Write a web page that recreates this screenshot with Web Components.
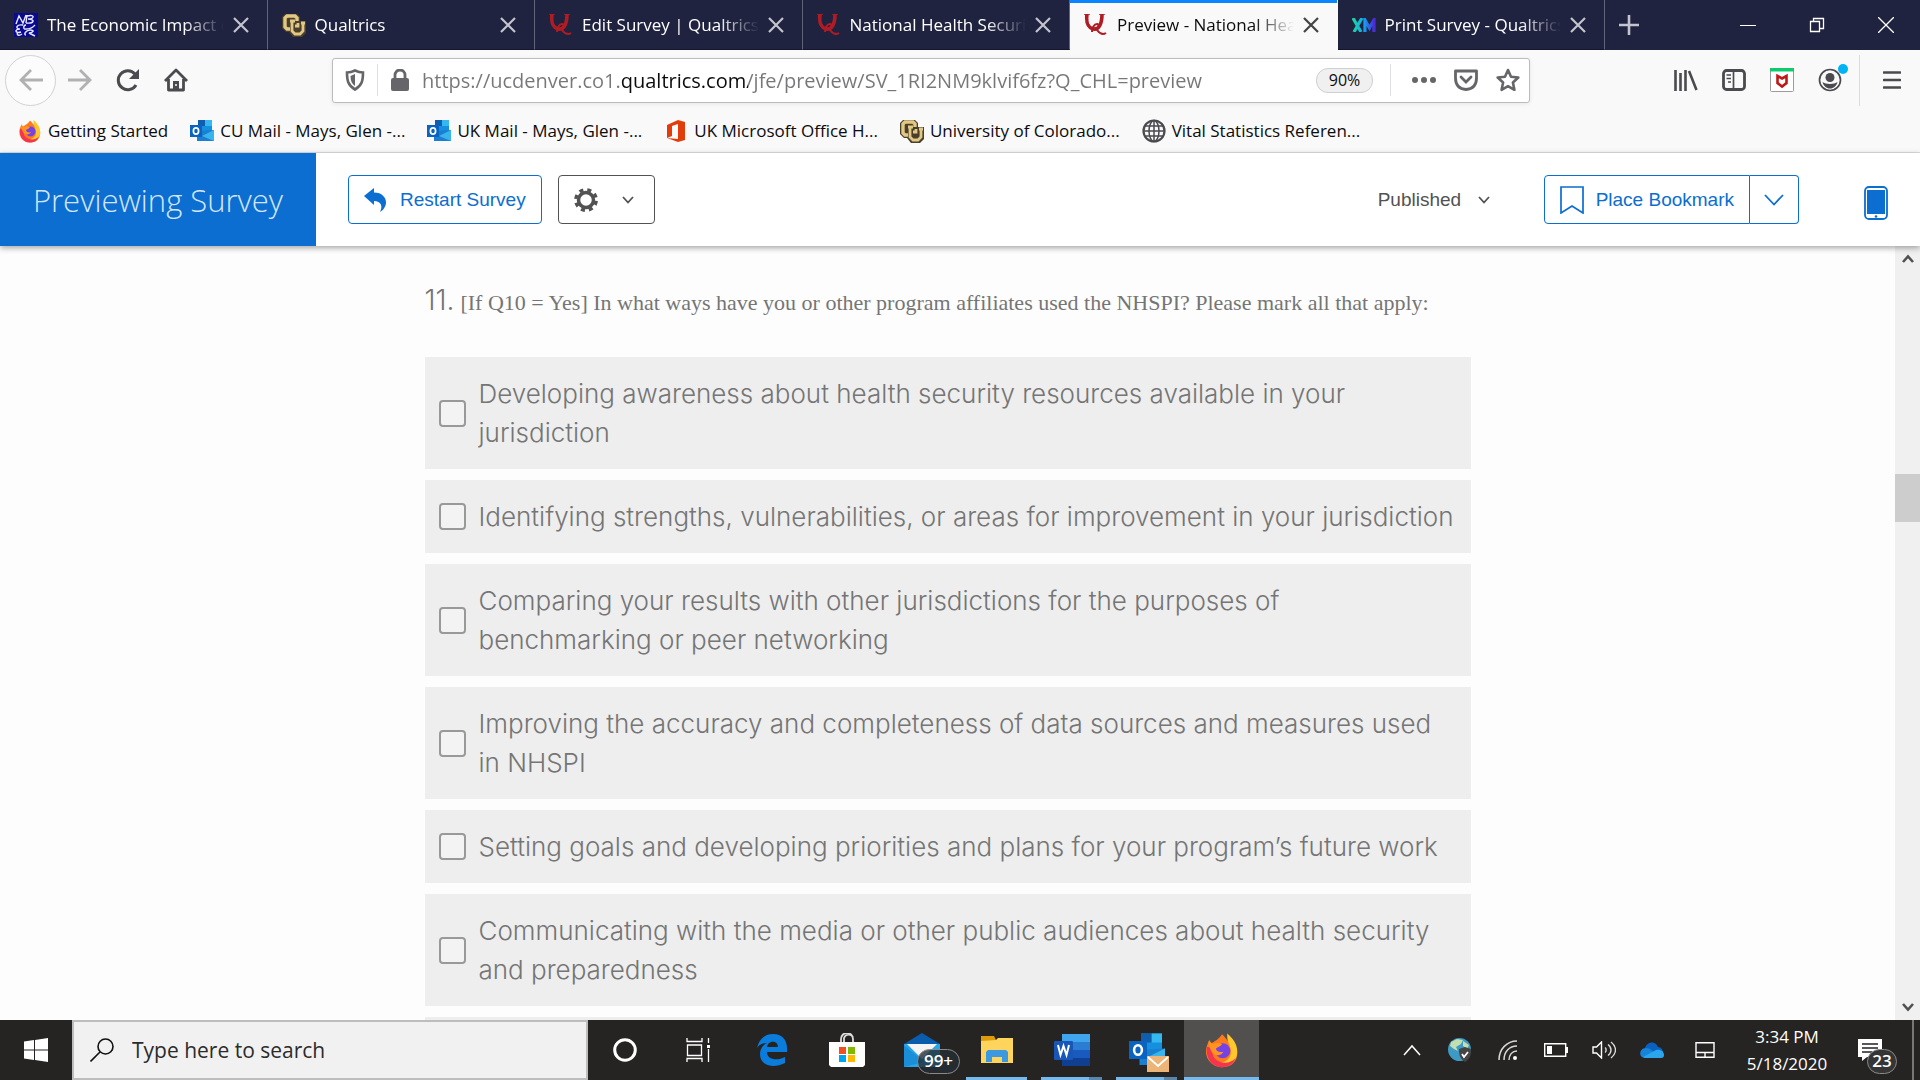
<!DOCTYPE html>
<html lang="en">
<head>
<meta charset="utf-8">
<title>Preview - National Health Security Preparedness Index</title>
<style>
  html, body {
    height: 100%;
    margin: 0;
  }
  body {
    display: flex;
    flex-direction: column;
    overflow: hidden;
    font-family: "Open Sans", "Noto Sans", sans-serif;
    font-size: 17px;
    color: #0c0c0d;
    background: #fdfdfd;
  }
  .page {
    display: flex;
    flex: 1;
    min-height: 0;
  }
</style>
</head>
<body>
  <tab-strip>
    <browser-tab icon="nber">The Economic Impact of</browser-tab>
    <browser-tab icon="cu">Qualtrics</browser-tab>
    <browser-tab icon="q">Edit Survey | Qualtrics S</browser-tab>
    <browser-tab icon="q">National Health Security</browser-tab>
    <browser-tab icon="q" active>Preview - National Health</browser-tab>
    <browser-tab icon="xm">Print Survey - Qualtrics</browser-tab>
  </tab-strip>
  <nav-bar url="https://ucdenver.co1.qualtrics.com/jfe/preview/SV_1RI2NM9klvif6fz?Q_CHL=preview"></nav-bar>
  <bookmarks-bar>
    <bookmark-link icon="firefox">Getting Started</bookmark-link>
    <bookmark-link icon="outlook">CU Mail - Mays, Glen -...</bookmark-link>
    <bookmark-link icon="outlook">UK Mail - Mays, Glen -...</bookmark-link>
    <bookmark-link icon="office">UK Microsoft Office H...</bookmark-link>
    <bookmark-link icon="cu">University of Colorado...</bookmark-link>
    <bookmark-link icon="globe">Vital Statistics Referen...</bookmark-link>
  </bookmarks-bar>
  <preview-header></preview-header>
  <div class="page">
    <survey-question number="11.">
      <span slot="text">[If Q10 = Yes] In what ways have you or other program affiliates used the NHSPI? Please mark all that apply:</span>
      <survey-option>Developing awareness about health security resources available in your jurisdiction</survey-option>
      <survey-option>Identifying strengths, vulnerabilities, or areas for improvement in your jurisdiction</survey-option>
      <survey-option>Comparing your results with other jurisdictions for the purposes of<br>benchmarking or peer networking</survey-option>
      <survey-option>Improving the accuracy and completeness of data sources and measures used<br>in NHSPI</survey-option>
      <survey-option>Setting goals and developing priorities and plans for your program’s future work</survey-option>
      <survey-option>Communicating with the media or other public audiences about health security and preparedness</survey-option>
      <survey-option></survey-option>
    </survey-question>
    <page-scrollbar></page-scrollbar>
  </div>
  <task-bar></task-bar>

<script>
const cuLogo = `
  <path d="M3 1h12l3 3v4h6v12l-4 4h-9l-4-5H4l-4-4V4z" fill="#4a3f28"/>
  <path d="M15 8V5l-2-2H5L3 5v9l2 2h3" fill="none" stroke="#e2c886" stroke-width="3.400"/>
  <path d="M8 8h5M10 8v10l3 3h5l3-3V10M13 13h3v-3M19 10h4" fill="none" stroke="#e2c886" stroke-width="2.800"/>`;

const firefoxLogo = `
  <path d="M12 1.500c2 1.500 2.500 3 4 4.500l1-1c4 3 6 7 5 11-1 5-5 7.500-10 7.500S2.500 20 1.500 15C1 11 2 8 4 5c0 1.500.5 2 1 2.500C7 6 10 5 12 1.500z" fill="#ff7a1a"/>
  <path d="M15.500 1c4 3.500 7.500 8 6.500 14-1 5-5 8-10 8-3 0-5.500-1-7-3 7 2 13-1 13-7 0-4-3-6-2.500-12z" fill="#ffc72e"/>
  <path d="M2 10c-1 7 3 13.500 10 13.500 5 0 8-3 9-6-3 3-7 4-11 2-4-1.500-5-5-4-9z" fill="#f5344f"/>
  <circle cx="12.500" cy="12.500" r="5" fill="#7542e5"/>
  <path d="M3 6l3 2c2-1 4-1 6 0-1 2-3 2-4 3 0 2 3 3 5 2-1 3-6 3.500-8 0C4 11 3 9 3 6z" fill="#ff9422"/>`;

const outlookLogo = `
  <path d="M8 1h14v11H8z" fill="#1490df"/>
  <path d="M15 1h7v6h-7z" fill="#35b8f1"/>
  <path d="M8 1h7v6H8z" fill="#0f5fae"/>
  <path d="M7 12l17-1v11H7z" fill="#1a7fd1"/>
  <path d="M24 11v11l-12-5z" fill="#39b5ee"/>
  <path d="M0 6h12v12H0z" fill="#0a63c0"/>
  <ellipse cx="6" cy="12" rx="2.600" ry="3.200" fill="none" stroke="#fff" stroke-width="1.700"/>`;

// name: [viewBox, markup]
const icons = {
  nber: ['0 0 24 24', `<path d="M0 0h24v24H0z" fill="#090a8f"/><g fill="none" stroke="#e8e9ff" stroke-width="1.400">
    <path d="M2 11L5 3l4 7 3-8M13 2l-1 8M13 3c9-2 7 3 1 3 8 0 6 5-2 4M9 12c-7-1-8 4-3 4-6 0-5 5 1 3M12 12c-3 0-3 5 0 4 6 0 8-3 9-4M8 21c-4 3-6 0-4-2M12 22c-3 0 0-5 4-5 6 0 2 3-1 3l6 3"/></g>`],
  cu: ['0 0 24 24', cuLogo],
  q: ['0 0 24 22', `<path d="M3 0c-1 8 0 13 6 15 6 1 9-5 9-15" fill="none" stroke="#b01c23" stroke-width="3.600"/>
    <path d="M8 18c0-4 2-8 5-8s1 4 0 6c3 4 6 5 9 3" fill="none" stroke="#b01c23" stroke-width="2"/><path d="M0 0h6M15 0h6" stroke="#b01c23" stroke-width="1.500"/>`],
  xm: ['0 0 24 14', `<defs><linearGradient id="g"><stop offset="0" stop-color="#1ed6a0"/><stop offset=".5" stop-color="#12a8f0"/><stop offset="1" stop-color="#4a2bd8"/></linearGradient></defs>
    <path d="M1 0l8 14M10 0L2 14M13 14V2l4.500 8L22 2v12" fill="none" stroke="url(#g)" stroke-width="3.200"/>`],
  close: ['0 0 16 16', `<path d="M1 1l14 14M15 1L1 15" fill="none" stroke="currentColor" stroke-width="2.200"/>`],
  plus: ['0 0 22 22', `<path d="M11 1v20M1 11h20" stroke="currentColor" stroke-width="2.600"/>`],
  minimize: ['0 0 16 16', `<path d="M0 8.500h16" stroke="#fff"/>`],
  restore: ['0 0 16 16', `<path d="M1.500 4.500h9v10h-9zM4.500 4V1.500h10v10H11" fill="none" stroke="#fff" stroke-width="1.300"/>`],
  closeWindow: ['0 0 16 16', `<path d="M0 0l16 16M16 0L0 16" stroke="#fff" stroke-width="1.300"/>`],
  back: ['0 0 24 24', `<path d="M12 2L2 12l10 10M2 12h22" fill="none" stroke="currentColor" stroke-width="2.800"/>`],
  forward: ['0 0 24 24', `<path d="M12 2l10 10-10 10M22 12H0" fill="none" stroke="currentColor" stroke-width="2.800"/>`],
  reload: ['0 0 24 24', `<path d="M19 6a9.500 9.500 0 1 0 1 11" fill="none" stroke="currentColor" stroke-width="3"/><path d="M23 1v10H13z" fill="currentColor"/>`],
  home: ['0 0 24 24', `<path d="M1 13L12 2l11 11M4.500 11v11h15V11" fill="none" stroke="currentColor" stroke-width="2.800" stroke-linejoin="round"/><path d="M9 13h6v9H9z" fill="currentColor"/><path d="M12 16v2" stroke="#fff" stroke-width="1.500"/>`],
  shield: ['0 0 20 22', `<path d="M10 1.500c3 1.500 5 2 8 2 0 8-1 13-8 17-7-4-8-9-8-17 3 0 5-.5 8-2z" fill="none" stroke="currentColor" stroke-width="2.600"/><path d="M10 5v12c-3-2-4.500-5-4.500-10z" fill="currentColor"/>`],
  lock: ['0 0 20 22', `<path d="M5 10V6a5 5 0 0 1 10 0v4" fill="none" stroke="currentColor" stroke-width="2.800"/><rect x="1" y="9" width="18" height="13" rx="2" fill="currentColor"/>`],
  dots: ['0 0 24 6', `<g fill="currentColor"><circle cx="3" cy="3" r="3"/><circle cx="12" cy="3" r="3"/><circle cx="21" cy="3" r="3"/></g>`],
  pocket: ['0 0 24 22', `<path d="M1.500 2h21v7c0 7-4 11-10.500 11.500C5.500 20 1.500 16 1.500 9z" fill="none" stroke="currentColor" stroke-width="2.800" stroke-linejoin="round"/><path d="M7 8l5 5 5-5" fill="none" stroke="currentColor" stroke-width="2.800" stroke-linecap="round"/>`],
  star: ['0 0 24 24', `<path d="M12 2l3 6.700 7.300.8-5.400 5 1.500 7.300L12 18.200l-6.400 3.600 1.500-7.300-5.400-5 7.300-.8z" fill="none" stroke="currentColor" stroke-width="2.600" stroke-linejoin="round"/>`],
  library: ['0 0 24 22', `<path d="M1.500 1v21M6.500 4v18M11.500 1v21M15 2l7.500 19" stroke="currentColor" stroke-width="2.600"/>`],
  sidebar: ['0 0 24 22', `<rect x="1.500" y="1.500" width="21" height="19" rx="3" fill="none" stroke="currentColor" stroke-width="2.800"/><path d="M11.500 2v18M4.500 6H9M4.500 9.500H9M6 13h3" stroke="currentColor" stroke-width="1.700"/>`],
  mcafee: ['0 0 24 24', `<rect x=".5" y=".5" width="23" height="23" rx="1" fill="#fff" stroke="#9b9b9f"/><path d="M0 0h24v3.500H0z" fill="#0fca6c"/><path d="M7.500 8l4.500 2.500L16.500 8v7L12 18.500 7.500 15z" fill="none" stroke="#c01818" stroke-width="2.600"/>`],
  account: ['0 0 24 24', `<circle cx="12" cy="12" r="10.500" fill="none" stroke="currentColor" stroke-width="1.700"/><circle cx="12" cy="9.500" r="4.500" fill="currentColor"/><path d="M4.500 14c3 2.500 12 2.500 15 0-1 4-4 6.500-7.500 6.500S5.500 18 4.500 14z" fill="currentColor"/>`],
  menu: ['0 0 18 18', `<path d="M1 1.500h16M1 9h16M1 16.500h16" stroke="currentColor" stroke-width="2.600" stroke-linecap="round"/>`],
  firefox: ['0 0 24 24', firefoxLogo],
  outlook: ['0 0 24 24', outlookLogo],
  office: ['0 0 24 24', `<path d="M14 1l7 2v18l-7 2-11-4 11 1V5L8 7v10l-5 2V6z" fill="#e13d0b"/>`],
  globe: ['0 0 24 24', `<g fill="none" stroke="#4a4a4f" stroke-width="1.500"><circle cx="12" cy="12" r="10.500" stroke-width="2.200"/><ellipse cx="12" cy="12" rx="5" ry="10.500"/><path d="M12 1v22M1 12h22M3 7h18M3 17h18"/></g>`],
  restart: ['0 0 24 24', `<path d="M0 8l10-8v4.500c8 0 12 5 12 10 0 4-3 8-6 9.500 3-6 1-11-6-11v4z" fill="currentColor"/>`],
  gear: ['0 0 24 24', `<circle cx="12" cy="12" r="7.500" fill="none" stroke="currentColor" stroke-width="3.500"/><circle cx="12" cy="12" r="10.200" fill="none" stroke="currentColor" stroke-width="3.500" stroke-dasharray="4 4.011" stroke-dashoffset="-1"/>`],
  chevron: ['0 0 12 8', `<path d="M1 1l5 5.500L11 1" fill="none" stroke="currentColor" stroke-width="1.800"/>`],
  wideChevron: ['0 0 20 12', `<path d="M1 1l9 9.500L19 1" fill="none" stroke="currentColor" stroke-width="1.800"/>`],
  bookmark: ['0 0 24 28', `<path d="M1 1h22v26l-11-7-11 7z" fill="none" stroke="currentColor" stroke-width="1.700"/>`],
  phone: ['0 0 24 34', `<rect x="1" y="1" width="22" height="32" rx="4" fill="#fff" stroke="#0b6ed0" stroke-width="1.800"/><path d="M3 4h18v24H3z" fill="#0b6ed0"/><circle cx="12" cy="30.500" r="1.300" fill="#0b6ed0"/>`],
  scrollUp: ['0 0 12 10', `<path d="M1 8l5-5.500L11 8" fill="none" stroke="#505050" stroke-width="2.600"/>`],
  scrollDown: ['0 0 12 10', `<path d="M1 2l5 5.500L11 2" fill="none" stroke="#505050" stroke-width="2.600"/>`],
  windows: ['0 0 24 24', `<path d="M0 3.500l10-1.400v9.400H0zM11 2l13-2v11.500H11zM0 12.500h10v9.400L0 20.500zM11 12.500h13V24l-13-2z" fill="#fff"/>`],
  search: ['0 0 24 24', `<circle cx="15.500" cy="8.500" r="7.500" fill="none" stroke="#111" stroke-width="1.600"/><path d="M10 14l-9.500 9.500" stroke="#111" stroke-width="1.600"/>`],
  cortana: ['0 0 24 24', `<circle cx="12" cy="12" r="10.300" fill="none" stroke="#fff" stroke-width="3"/>`],
  taskview: ['0 0 24 24', `<path d="M1 0v3.500h15V0M1.500 7h14v10.500h-14zM1 24v-3.500h15V24M22.500 0v5M22.500 11v13" fill="none" stroke="#fff" stroke-width="1.300"/><path d="M21 7h3v3h-3z" fill="#fff"/>`],
  edge: ['0 0 30 32', `<path d="M0 14C2 5 8 0 16 0c9 0 14 6 14 14v4H10c0 8 10 9 18 5v6c-4 2-8 3-12 3C8 32 3 27 3 20c0-5 3-9 7-11-5 0-8 2-10 5zM10 13h11c0-7-10-7-11 0z" fill="#0a7cdb" fill-rule="evenodd"/>`],
  store: ['0 0 36 34', `<path d="M12 10V6a6 6 0 0 1 12 0v4M15 10V5a5 5 0 0 1 9-1" fill="none" stroke="#ddd" stroke-width="1.800"/><path d="M0 9h36v23l-2 2H2l-2-2z" fill="#fff"/><path d="M10 14h7v7h-7z" fill="#f25022"/><path d="M19 14h7v7h-7z" fill="#7fba00"/><path d="M10 22h7v7h-7z" fill="#00a4ef"/><path d="M19 22h7v7h-7z" fill="#ffb900"/>`],
  mail: ['0 0 36 34', `<path d="M0 11L18 0l18 11z" fill="#0a5cad"/><path d="M0 11h36v23H0z" fill="#28a5e8"/><path d="M3 11h30L18 26z" fill="#f4f4f4"/><path d="M0 34V12l20 17z" fill="#1a8fd8"/>`],
  explorer: ['0 0 32 28', `<path d="M0 0h13l2 4h17v6H0z" fill="#dd9a0a"/><path d="M0 5l15-1 2-2h15v25H0z" fill="#ffd45c"/><path d="M5 26V16l2-2h18l2 2v10h-6v-5H11v5z" fill="#3a99e0"/>`],
  word: ['0 0 36 34', `<path d="M8 1h28v9H8z" fill="#41a5ee"/><path d="M8 9h28v9H8z" fill="#2b7cd3"/><path d="M8 17h28v8H8z" fill="#185abd"/><path d="M8 25h28v8H8z" fill="#103f91"/><rect y="8" width="19" height="19" rx="1" fill="#1857b8"/><path d="M4 12l2.500 10L9.500 13l3 9L15 12" fill="none" stroke="#fff" stroke-width="2"/>`],
  envelope: ['0 0 22 16', `<path d="M0 0h22v16H0z" fill="#ecb476"/><path d="M1 1l10 9L21 1" fill="none" stroke="#fff" stroke-width="1.800"/>`],
  trayUp: ['0 0 18 12', `<path d="M1 11l8-9 8 9" fill="none" stroke="#fff" stroke-width="1.500"/>`],
  trayGlobe: ['0 0 24 24', `<circle cx="11.500" cy="11.500" r="11.500" fill="#3d9ac4"/><path d="M3 4l6-3 6 1-2 4-5 3 2 4-4-2-4-3zM15 3l6 4-2 4-4-3z" fill="#c3dfaf"/><path d="M17 9l6 2c0 6-1 10-6 13-5-3-6-7-6-13z" fill="#444"/><path d="M14 16l2 3 4-5" fill="none" stroke="#fff" stroke-width="1.800"/>`],
  wifi: ['0 0 20 20', `<g fill="none" stroke="#d8d8d8" stroke-width="1.500"><path d="M1 20C1 9 9 1 19 1M6 20c0-8 5-14 13-14M11 20c0-5 3-9 8-9" /></g><circle cx="17" cy="18" r="2" fill="#fff"/>`],
  battery: ['0 0 24 14', `<path d="M.7.7h21v12.600H.7z" fill="none" stroke="#fff" stroke-width="1.400"/><path d="M3 3h5v8H3zM22 4h2v6h-2z" fill="#fff"/>`],
  speaker: ['0 0 24 18', `<path d="M1 6h3.500l5-5v16l-5-5H1z" fill="none" stroke="#fff" stroke-width="1.400"/><path d="M13 6.500c1.500 1 1.500 4 0 5M16 3.500c4 3 4 8 0 11M19 1c6 5 6 11 0 16" fill="none" stroke="#ddd" stroke-width="1.400"/>`],
  onedrive: ['0 0 24 16' , `<path d="M5 6c2-6 10-8 13-1 3 0 5 3 5 5H2z" fill="#0a62c0"/><path d="M5 16c-7 0-6-10 1-10 4 0 7 3 9 6z" fill="#1684d8"/><path d="M3 15l13-7c5-1 8 2 8 5 0 2-1 3-3 3H5z" fill="#2ba6ec"/>`],
  touchpad: ['0 0 20 16', `<path d="M1 .7h18v14.600H1zM1 10.500h18M10 10.500v5" fill="none" stroke="#fff" stroke-width="1.400"/>`],
  notes: ['0 0 24 22', `<path d="M0 0h24v18H9l-5 4v-4H0z" fill="#fff"/><path d="M4 5h16M4 9h16M4 13h10" stroke="#222" stroke-width="1.300"/>`]
};

function shadow(element, html) {
  element.attachShadow({mode: 'open'}).innerHTML = html;
}

class UiIcon extends HTMLElement {
  connectedCallback() {
    if (this.shadowRoot) return;
    const [box, markup] = icons[this.getAttribute('name')];
    const [, , w, h] = box.split(' ');
    const width = this.getAttribute('width') || w;
    const height = Math.round(width * h / w);
    shadow(this, `
      <style>
        :host { display: block; flex: none; }
        svg { display: block; }
      </style>
      <svg width="${width}" height="${height}" viewBox="${box}" aria-hidden="true">${markup}</svg>
    `);
  }
}

class TabStrip extends HTMLElement {
  connectedCallback() {
    shadow(this, `
      <style>
        :host { display: flex; flex: none; height: 50px; background: #202340; color: #fff; }
        .tabs { display: flex; flex: 1; min-width: 0; }
        .controls { display: flex; align-items: center; flex: none; width: 315px; }
        button { display: flex; align-items: center; justify-content: center; width: 69px; height: 50px; padding: 0; border: 0; background: none; color: #c3c4cd; }
        .add { width: 48px; margin-right: auto; }
      </style>
      <div class="tabs"><slot></slot></div>
      <div class="controls">
        <button class="add" aria-label="New tab"><ui-icon name="plus"></ui-icon></button>
        <button aria-label="Minimize"><ui-icon name="minimize"></ui-icon></button>
        <button aria-label="Restore"><ui-icon name="restore"></ui-icon></button>
        <button aria-label="Close window"><ui-icon name="closeWindow"></ui-icon></button>
      </div>
    `);
  }
}

class BrowserTab extends HTMLElement {
  connectedCallback() {
    shadow(this, `
      <style>
        :host {
          display: flex; align-items: center; gap: 9px; flex: 1; min-width: 0; box-sizing: border-box;
          padding: 0 18px 0 14px; border-right: 1px solid #62647a; border-bottom: 1px solid #15172e;
        }
        :host([active]) { background: #f9f9fa; color: #0c0c0d; border-color: #f9f9fa; box-shadow: inset 0 3px #0a84ff; }
        .title {
          flex: 1; overflow: hidden; white-space: nowrap; line-height: 24px;
          -webkit-mask-image: linear-gradient(to left, transparent, #000 40px);
          mask-image: linear-gradient(to left, transparent, #000 40px);
        }
        button { padding: 0; border: 0; background: none; color: #c3c4cd; }
        :host([active]) button { color: #444; }
      </style>
      <ui-icon name="${this.getAttribute('icon')}" width="24"></ui-icon>
      <span class="title"><slot></slot></span>
      <button aria-label="Close tab"><ui-icon name="close"></ui-icon></button>
    `);
  }
}

class NavBar extends HTMLElement {
  connectedCallback() {
    shadow(this, `
      <style>
        :host { display: flex; align-items: center; flex: none; height: 60px; padding: 0 8px 0 5px; background: #f9f9fa; color: #4a4a4f; }
        button { display: flex; align-items: center; justify-content: center; flex: none; width: 48px; height: 48px; padding: 0; border: 0; background: none; color: inherit; position: relative; }
        button[disabled] { color: #b1b1b3; }
        .back { width: 51px; height: 51px; border: 1px solid #d2d2d4; border-radius: 50%; background: #fcfcfc; }
        .address {
          display: flex; align-items: center; flex: 1; box-sizing: border-box; height: 45px; margin: 0 132px; padding-left: 12px;
          border: 1px solid #bcbcbe; border-radius: 3px; background: #fff; box-shadow: 0 1px 4px rgba(0, 0, 0, .08); color: #66666a;
        }
        .address button { width: 42px; height: 42px; }
        .line { width: 1px; height: 32px; margin: 0 12px; background: #dfdfe1; }
        input {
          flex: 1; min-width: 0; height: 32px; margin-left: 12px; padding: 0; border: 0; outline: 0; font: 20px "Open Sans", sans-serif;
          color: transparent; -webkit-background-clip: text; background-clip: text;
          background-image: linear-gradient(to right, #77777a 198px, #0c0c0d 198px 326px, #77777a 326px);
        }
        .address .zoom { width: 57px; height: 25px; margin-right: 5px; border: 1px solid #cfcfd1; border-radius: 12px; background: #f0f0f1; color: #0c0c0d; font: 16px "Open Sans", sans-serif; }
        .badge { position: absolute; top: 8px; right: 6px; width: 10px; height: 10px; border-radius: 50%; background: #00b3f4; }
        .end { width: 1px; height: 51px; margin: 0 12px 0 5px; background: #dcdcde; }
        .menu { width: 40px; }
      </style>
      <button class="back" aria-label="Back" disabled><ui-icon name="back"></ui-icon></button>
      <button aria-label="Forward" disabled><ui-icon name="forward"></ui-icon></button>
      <button aria-label="Reload"><ui-icon name="reload"></ui-icon></button>
      <button aria-label="Home"><ui-icon name="home"></ui-icon></button>
      <div class="address">
        <ui-icon name="shield"></ui-icon>
        <span class="line"></span>
        <ui-icon name="lock"></ui-icon>
        <input type="text" aria-label="Address" value="${this.getAttribute('url')}">
        <button class="zoom">90%</button>
        <span class="line"></span>
        <button aria-label="Page actions"><ui-icon name="dots"></ui-icon></button>
        <button aria-label="Save to Pocket"><ui-icon name="pocket"></ui-icon></button>
        <button aria-label="Bookmark this page"><ui-icon name="star"></ui-icon></button>
      </div>
      <button aria-label="Library"><ui-icon name="library"></ui-icon></button>
      <button aria-label="Sidebars"><ui-icon name="sidebar"></ui-icon></button>
      <button aria-label="McAfee"><ui-icon name="mcafee"></ui-icon></button>
      <button aria-label="Account"><ui-icon name="account"></ui-icon><span class="badge"></span></button>
      <span class="end"></span>
      <button class="menu" aria-label="Menu"><ui-icon name="menu"></ui-icon></button>
    `);
  }
}

class BookmarksBar extends HTMLElement {
  connectedCallback() {
    shadow(this, `
      <style>
        :host { display: flex; align-items: center; gap: 22px; flex: none; height: 42px; padding-left: 18px; background: #f9f9fa; border-bottom: 1px solid #dededf; }
      </style>
      <slot></slot>
    `);
  }
}

class BookmarkLink extends HTMLElement {
  connectedCallback() {
    shadow(this, `
      <style>
        :host { display: block; }
        a { display: flex; align-items: center; gap: 6px; color: inherit; text-decoration: none; white-space: nowrap; line-height: 24px; }
      </style>
      <a href="#"><ui-icon name="${this.getAttribute('icon')}" width="24"></ui-icon><span><slot></slot></span></a>
    `);
  }
}

class PreviewHeader extends HTMLElement {
  connectedCallback() {
    shadow(this, `
      <style>
        :host {
          display: flex; align-items: center; flex: none; height: 93px; position: relative; background: #fff;
          box-shadow: 0 2px 6px rgba(0, 0, 0, .35); font: 19px "Liberation Sans", Arial, sans-serif; color: #525252;
        }
        h1 {
          display: flex; align-items: center; justify-content: center; width: 316px; height: 93px; margin: 0 32px 0 0;
          background: #0b6ed0; color: #d3e6f8; font: 300 31px "Open Sans", sans-serif;
        }
        button, select { font: inherit; color: inherit; background: none; }
        button { display: flex; align-items: center; box-sizing: border-box; height: 49px; border: 1px solid #525252; border-radius: 4px; padding: 0 15px; }
        .blue { color: #0b6ed0; border-color: #0b6ed0; }
        .restart { gap: 12px; margin-right: 16px; }
        .gear { gap: 24px; padding-right: 20px; }
        .status { display: flex; align-items: center; gap: 16px; margin: 0 54px 0 auto; }
        select { appearance: none; border: 0; padding: 0; }
        .place { gap: 12px; border-radius: 4px 0 0 4px; }
        .more { border-left: 0; border-radius: 0 4px 4px 0; padding: 0 14px; }
        .phone { margin: 0 16px 0 49px; padding: 6px 16px 0; border: 0; }
      </style>
      <h1>Previewing Survey</h1>
      <button class="blue restart"><ui-icon name="restart"></ui-icon>Restart Survey</button>
      <button class="gear" aria-label="Tools"><ui-icon name="gear"></ui-icon><ui-icon name="chevron"></ui-icon></button>
      <label class="status">
        <select aria-label="Version"><option>Published</option></select>
        <ui-icon name="chevron"></ui-icon>
      </label>
      <button class="blue place"><ui-icon name="bookmark"></ui-icon>Place Bookmark</button>
      <button class="blue more" aria-label="Bookmarks"><ui-icon name="wideChevron"></ui-icon></button>
      <button class="phone" aria-label="Mobile view"><ui-icon name="phone"></ui-icon></button>
    `);
  }
}

class SurveyQuestion extends HTMLElement {
  connectedCallback() {
    shadow(this, `
      <style>
        :host { display: block; flex: 1; overflow: hidden; padding: 0 16px; color: #757575; }
        fieldset { display: flex; flex-direction: column; gap: 11px; max-width: 1046px; margin: 0 auto; padding: 0; border: 0; }
        legend { display: flex; align-items: baseline; gap: 6px; padding: 32px 0; line-height: 44px; font-family: "Liberation Serif", "Times New Roman", serif; font-size: 22px; }
        .number { font: 300 28px/44px Inter, sans-serif; }
      </style>
      <fieldset>
        <legend><span class="number">${this.getAttribute('number')}</span><slot name="text"></slot></legend>
        <slot></slot>
      </fieldset>
    `);
  }
}

class SurveyOption extends HTMLElement {
  connectedCallback() {
    shadow(this, `
      <style>
        :host { display: block; flex: none; background: #eee; font: 300 26px/39px Inter, "Open Sans", sans-serif; }
        label { display: flex; align-items: center; gap: 13px; min-height: 39px; padding: 17px 14px; }
        input { appearance: none; flex: none; box-sizing: border-box; width: 27px; height: 27px; margin: 0; border: 2px solid #999; border-radius: 4px; background: #f3f3f3; }
      </style>
      <label for="choice"><input type="checkbox" id="choice"><span><slot></slot></span></label>
    `);
  }
}

class PageScrollbar extends HTMLElement {
  connectedCallback() {
    shadow(this, `
      <style>
        :host { display: flex; flex-direction: column; flex: none; width: 25px; background: #f0f0f0; }
        .arrow { display: flex; align-items: center; justify-content: center; height: 26px; }
        .above { flex: 30; }
        .thumb { flex: 7; background: #cdcdcd; }
        .below { flex: 70; }
      </style>
      <div class="arrow"><ui-icon name="scrollUp"></ui-icon></div>
      <div class="above"></div>
      <div class="thumb"></div>
      <div class="below"></div>
      <div class="arrow"><ui-icon name="scrollDown"></ui-icon></div>
    `);
  }
}

class TaskApp extends HTMLElement {
  connectedCallback() {
    const badge = this.getAttribute('badge');
    shadow(this, `
      <style>
        :host { display: block; flex: none; width: 75px; }
        :host([narrow]) { width: 73px; }
        button { display: flex; align-items: center; justify-content: center; position: relative; width: 100%; height: 60px; padding: 0; border: 0; background: none; }
        :host([running]) button::after { content: ""; position: absolute; bottom: 0; left: 7px; right: 7px; height: 3px; background: #76b9ed; }
        :host([stacked]) button::after { background: linear-gradient(to right, #76b9ed 48px, #5a86ab 48px); }
        :host([active]) button { background: #51504f; }
        :host([active]) button::after { left: 0; right: 0; }
        .badge { position: absolute; right: -1px; top: 29px; width: 41px; height: 23px; border: 1px solid #8a8a8a; border-radius: 13px; background: rgba(38, 46, 52, .8); color: #fff; font: 600 17px/22px "Open Sans", sans-serif; }
        .overlay { display: block; position: absolute; right: 15px; bottom: 8px; }
      </style>
      <button aria-label="${this.getAttribute('label')}">
        <ui-icon name="${this.getAttribute('icon')}" width="${this.getAttribute('size')}"></ui-icon>
        ${badge ? `<span class="badge">${badge}</span>` : ''}
        <slot class="overlay"></slot>
      </button>
    `);
  }
}

class TaskBar extends HTMLElement {
  connectedCallback() {
    const tray = ['trayUp', 'trayGlobe', 'wifi', 'battery', 'speaker', 'onedrive', 'touchpad'];
    shadow(this, `
      <style>
        :host { display: flex; flex: none; height: 60px; background: #262423; color: #fff; position: relative; }
        button { display: flex; align-items: center; justify-content: center; flex: none; width: 48px; padding: 0; border: 0; background: none; color: inherit; position: relative; }
        .start { width: 72px; }
        .search { display: flex; align-items: center; gap: 18px; box-sizing: border-box; flex: 0 1 516px; padding-left: 16px; border: 2px solid #bdbdbd; background: #f1f1f1; }
        input { flex: 1; min-width: 0; height: 40px; padding: 0; border: 0; outline: 0; background: none; font: 21px "Open Sans", sans-serif; }
        input::placeholder { color: #2b2b2b; }
        .tray { display: flex; margin-left: auto; }
        .touchpad { width: 57px; }
        time { display: flex; flex-direction: column; justify-content: center; width: 108px; text-align: center; line-height: 27px; }
        .notes { width: 71px; padding-right: 14px; box-sizing: border-box; }
        .count { position: absolute; right: 15px; top: 29px; width: 28px; height: 23px; border: 1px solid #8a8a8a; border-radius: 13px; background: #353535; font: 600 17px/22px "Open Sans", sans-serif; }
        .edge { width: 6px; border-left: 2px solid #777; }
      </style>
      <button class="start" aria-label="Start"><ui-icon name="windows"></ui-icon></button>
      <label class="search"><ui-icon name="search"></ui-icon><input type="text" aria-label="Search" placeholder="Type here to search"></label>
      <task-app narrow icon="cortana" size="24" label="Cortana"></task-app>
      <task-app narrow icon="taskview" size="24" label="Task View"></task-app>
      <task-app icon="edge" size="30" label="Edge"></task-app>
      <task-app icon="store" size="36" label="Store"></task-app>
      <task-app icon="mail" size="36" label="Mail" badge="99+"></task-app>
      <task-app running icon="explorer" size="32" label="File Explorer"></task-app>
      <task-app running stacked icon="word" size="36" label="Word"></task-app>
      <task-app running stacked icon="outlook" size="36" label="Outlook"><ui-icon name="envelope"></ui-icon></task-app>
      <task-app running active icon="firefox" size="36" label="Firefox"></task-app>
      <div class="tray">
        ${tray.map(name => `<button class="${name}" aria-label="${name}"><ui-icon name="${name}"></ui-icon></button>`).join('')}
        <time datetime="2020-05-18T15:34"><span>3:34 PM</span><span>5/18/2020</span></time>
        <button class="notes" aria-label="Notifications"><ui-icon name="notes"></ui-icon><span class="count">23</span></button>
        <span class="edge"></span>
      </div>
    `);
  }
}

customElements.define('ui-icon', UiIcon);
customElements.define('tab-strip', TabStrip);
customElements.define('browser-tab', BrowserTab);
customElements.define('nav-bar', NavBar);
customElements.define('bookmarks-bar', BookmarksBar);
customElements.define('bookmark-link', BookmarkLink);
customElements.define('preview-header', PreviewHeader);
customElements.define('survey-question', SurveyQuestion);
customElements.define('survey-option', SurveyOption);
customElements.define('page-scrollbar', PageScrollbar);
customElements.define('task-app', TaskApp);
customElements.define('task-bar', TaskBar);
</script>
</body>
</html>
